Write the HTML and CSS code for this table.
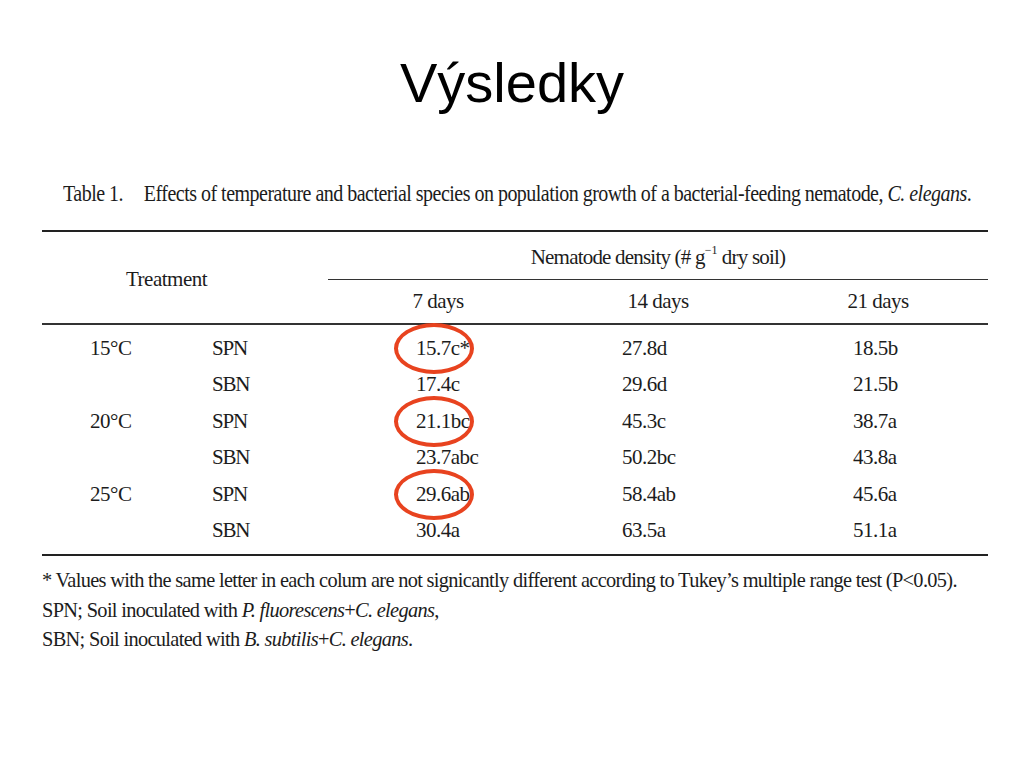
FILE: index.html
```html
<!DOCTYPE html>
<html lang="cs">
<head>
<meta charset="utf-8">
<title>Výsledky</title>
<link rel="stylesheet" href="styles.css">
</head>
<body>
<h1 class="title">Výsledky</h1>
<p class="caption"><span class="tno">Table 1.</span>Effects of temperature and bacterial species on population growth of a bacterial-feeding nematode, <i>C. elegans</i>.</p>
<div class="table">
  <div class="thead">
    <div class="treat"><span>Treatment</span></div>
    <div class="dgroup">
      <div class="density"><span>Nematode density (# g<sup>−1</sup> dry soil)</span></div>
      <div class="days">
        <div class="day">7 days</div>
        <div class="day">14 days</div>
        <div class="day">21 days</div>
      </div>
    </div>
  </div>
  <div class="tbody">
    <div class="c t">15°C</div><div class="c b">SPN</div><div class="c v1"><span class="mark">15.7c*</span></div><div class="c v2">27.8d</div><div class="c v3">18.5b</div>
    <div class="c t"></div><div class="c b">SBN</div><div class="c v1">17.4c</div><div class="c v2">29.6d</div><div class="c v3">21.5b</div>
    <div class="c t">20°C</div><div class="c b">SPN</div><div class="c v1"><span class="mark">21.1bc</span></div><div class="c v2">45.3c</div><div class="c v3">38.7a</div>
    <div class="c t"></div><div class="c b">SBN</div><div class="c v1">23.7abc</div><div class="c v2">50.2bc</div><div class="c v3">43.8a</div>
    <div class="c t">25°C</div><div class="c b">SPN</div><div class="c v1"><span class="mark">29.6ab</span></div><div class="c v2">58.4ab</div><div class="c v3">45.6a</div>
    <div class="c t"></div><div class="c b">SBN</div><div class="c v1">30.4a</div><div class="c v2">63.5a</div><div class="c v3">51.1a</div>
  </div>
</div>
<div class="notes">
  <p class="note">* Values with the same letter in each colum are not signicantly different according to Tukey’s multiple range test (P&lt;0.05).</p>
  <p class="note">SPN; Soil inoculated with <i>P. fluorescens</i>+<i>C. elegans</i>,</p>
  <p class="note">SBN; Soil inoculated with <i>B. subtilis</i>+<i>C. elegans</i>.</p>
</div>
</body>
</html>
```
FILE: styles.css
```css
html, body {
  margin: 0;
  padding: 0;
  background: #ffffff;
}
body {
  width: 1024px;
  height: 768px;
  overflow: hidden;
  font-family: "Liberation Serif", "Times New Roman", serif;
  color: #1c1c1c;
}
.title {
  margin: 51px 0 0 0;
  font-family: "Liberation Sans", Arial, sans-serif;
  font-weight: normal;
  font-size: 56px;
  line-height: 64px;
  text-align: center;
  color: #000;
}
.caption {
  margin: 66px 0 0 63px;
  font-size: 23px;
  line-height: 26px;
  letter-spacing: -0.6px;
  white-space: nowrap;
  transform: scaleX(0.87);
  transform-origin: left center;
}
.tno {
  margin-right: 24px;
}
.table {
  margin: 23px 0 0 42px;
  width: 946px;
  border-top: 2px solid #222;
  border-bottom: 2px solid #222;
  font-size: 21px;
  letter-spacing: -0.5px;
}
.thead {
  display: flex;
  border-bottom: 2px solid #333;
}
.treat {
  width: 286px;
  display: flex;
  align-items: center;
  padding-left: 84px;
  box-sizing: border-box;
  padding-top: 4px;
}
.dgroup {
  flex: 1;
  display: flex;
  flex-direction: column;
}
.density {
  height: 48px;
  display: flex;
  align-items: center;
  justify-content: center;
  border-bottom: 1.5px solid #333;
  box-sizing: border-box;
  padding-top: 4px;
  letter-spacing: -0.8px;
}
.density sup {
  font-size: 12px;
  position: relative;
  top: -2px;
  line-height: 0;
  letter-spacing: 0;
}
.days {
  display: flex;
  height: 43px;
}
.day {
  flex: 1;
  display: flex;
  align-items: center;
  justify-content: center;
}
.tbody {
  display: grid;
  grid-template-columns: 143px 143px 220px 220px 220px;
  grid-auto-rows: 36.5px;
  padding: 5px 0 5px 0;
}
.c {
  display: flex;
  align-items: center;
  white-space: nowrap;
}
.t { padding-left: 48px; }
.b { padding-left: 27px; letter-spacing: -1.2px; }
.v1 { padding-left: 88px; }
.v2 { padding-left: 74px; }
.v3 { padding-left: 85px; }
.mark {
  position: relative;
}
.mark::after {
  content: "";
  position: absolute;
  left: -22px;
  top: -13px;
  width: 72px;
  height: 43px;
  border: 4px solid #e8431f;
  border-radius: 50%;
}
.notes {
  margin: 10px 0 0 42px;
}
.note {
  margin: 0;
  font-size: 21px;
  line-height: 29.5px;
  letter-spacing: -0.7px;
  white-space: nowrap;
  transform: scaleX(0.97);
  transform-origin: left center;
}
```
